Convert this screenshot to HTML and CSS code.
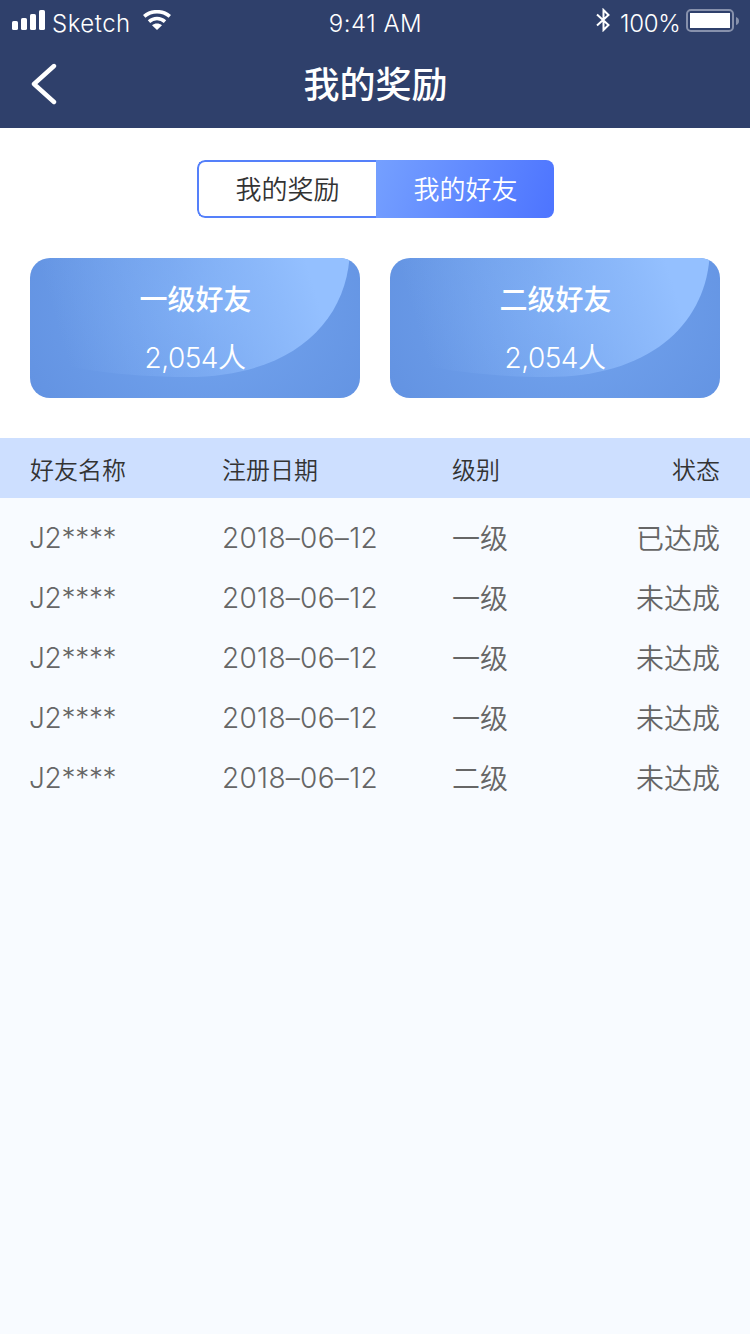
FILE: index.html
```html
<!DOCTYPE html>
<html lang="zh-CN">
<head>
<meta charset="UTF-8">
<meta name="viewport" content="width=750">
<title>我的奖励</title>
<link rel="stylesheet" href="styles.css">
</head>
<body>
<svg class="defs" width="0" height="0" aria-hidden="true">
  <defs>
    <linearGradient id="shine" gradientUnits="userSpaceOnUse" x1="40" y1="110" x2="286" y2="35">
      <stop offset="0" stop-color="#94c0ff" stop-opacity="0"/>
      <stop offset="0.5" stop-color="#94c0ff" stop-opacity="0.36"/>
      <stop offset="1" stop-color="#94c0ff"/>
    </linearGradient>
  </defs>
</svg>
<header class="header">
  <div class="status">
    <div class="status-left">
      <svg class="signal" width="33" height="20" viewBox="0 0 33 20" fill="#fff"><rect x="0" y="11" width="6" height="9" rx="1.6"/><rect x="9" y="8" width="6" height="12" rx="1.6"/><rect x="18" y="4" width="6" height="16" rx="1.6"/><rect x="27" y="0" width="6" height="20" rx="1.6"/></svg>
      <span class="carrier">Sketch</span>
      <svg class="wifi" width="28" height="20" viewBox="0 0 28 20" fill="none" stroke="#fff" stroke-width="3.6"><path d="M1.2 6.4C8.5 .1 19.5 .1 26.8 6.4"/><path d="M6 11.6C10.600 7.500 17.400 7.500 22 11.600"/><path d="M14 20L9 15.300C11.800 12.800 16.200 12.800 19 15.300Z" fill="#fff" stroke="none"/></svg>
    </div>
    <span class="time">9:41 AM</span>
    <div class="status-right">
      <svg class="bluetooth" width="14" height="24" viewBox="0 0 14 24" fill="none" stroke="#fff" stroke-width="2"><path d="M1 6.500L12.500 17L7.500 22V2L12.500 7L1 17.500"/></svg>
      <span class="percent">100%</span>
      <svg class="battery" width="53" height="24" viewBox="0 0 53 24"><rect x="1" y="1" width="46" height="21" rx="4" fill="none" stroke="#8791ac" stroke-width="2"/><rect x="4" y="4" width="40" height="15" fill="#fff"/><path d="M50 8Q53 9 53 12Q53 15 50 16Z" fill="#8791ac"/></svg>
    </div>
  </div>
  <nav class="navbar">
    <svg class="back" width="26" height="42" viewBox="0 0 26 42" fill="none" stroke="#fff" stroke-width="4.4" stroke-linecap="round" stroke-linejoin="round"><path d="M23 3L3 21L23 39"/></svg>
    <h1 class="title">我的奖励</h1>
  </nav>
</header>
<section class="summary">
  <div class="tabs">
    <div class="tab">我的奖励</div>
    <div class="tab tab-active">我的好友</div>
  </div>
  <div class="cards">
    <div class="card">
      <svg class="card-bg" viewBox="0 0 330 140"><path fill="url(#shine)" d="M0 0H319.500C314 68 258 119 157 119C90 119 40 110 0 100Z"/></svg>
      <div class="card-name">一级好友</div>
      <div class="card-count">2,054<span class="unit">人</span></div>
    </div>
    <div class="card">
      <svg class="card-bg" viewBox="0 0 330 140"><path fill="url(#shine)" d="M0 0H319.500C314 68 258 119 157 119C90 119 40 110 0 100Z"/></svg>
      <div class="card-name">二级好友</div>
      <div class="card-count">2,054<span class="unit">人</span></div>
    </div>
  </div>
</section>
<main class="table">
  <div class="row row-head"><span>好友名称</span><span>注册日期</span><span>级别</span><span>状态</span></div>
  <div class="rows">
    <div class="row"><span class="name">J2****</span><span class="date">2018–06–12</span><span>一级</span><span>已达成</span></div>
    <div class="row"><span class="name">J2****</span><span class="date">2018–06–12</span><span>一级</span><span>未达成</span></div>
    <div class="row"><span class="name">J2****</span><span class="date">2018–06–12</span><span>一级</span><span>未达成</span></div>
    <div class="row"><span class="name">J2****</span><span class="date">2018–06–12</span><span>一级</span><span>未达成</span></div>
    <div class="row"><span class="name">J2****</span><span class="date">2018–06–12</span><span>二级</span><span>未达成</span></div>
  </div>
</main>
</body>
</html>
```
FILE: styles.css
```css
* { box-sizing: border-box; }
body {
  margin: 0;
  width: 750px;
  min-height: 1334px;
  background: #f8fbff;
  font-family: Inter, "Noto Sans CJK SC", sans-serif;
  color: #333;
}
.defs { position: absolute; }
.header { height: 128px; background: #2f406b; color: #fff; }
.status {
  display: grid;
  grid-template-columns: 1fr auto 1fr;
  height: 40px;
  padding: 0 11px 0 12px;
  font-size: 24px;
  font-weight: 350;
  line-height: 46px;
}
.status-left, .status-right { display: flex; align-items: flex-start; }
.status-right { justify-content: flex-end; }
.signal { margin-top: 10px; }
.carrier { width: 79px; margin-left: 7px; letter-spacing: 0.5px; line-height: 47px; }
.wifi { margin: 10px 0 0 12px; }
.time { letter-spacing: 0.5px; line-height: 48px; }
.bluetooth { margin: 8px 10px 0 0; }
.percent { width: 61px; margin-right: 5px; letter-spacing: -0.3px; line-height: 47px; }
.battery { margin-top: 9px; }
.navbar {
  display: grid;
  grid-template-columns: 60px 1fr 60px;
  height: 88px;
  padding: 0 31px;
}
.back { margin-top: 23px; }
.title {
  margin: 0;
  padding-left: 1px;
  text-align: center;
  font-size: 36px;
  font-weight: 500;
  line-height: 91px;
}
.summary { height: 310px; padding: 32px 30px 0; background: #fff; }
.tabs {
  display: flex;
  width: 357px;
  height: 58px;
  margin: 0 auto 40px 167px;
  border-radius: 8px;
  overflow: hidden;
  font-size: 26px;
  font-weight: 350;
  line-height: 57px;
  text-align: center;
}
.tab {
  width: 179px;
  border: 2px solid #5580fa;
  border-right: 0;
  border-radius: 8px 0 0 8px;
  line-height: 56px;
}
.tab-active {
  width: 178px;
  padding: 2px 0 0 1px;
  border: 0;
  border-radius: 0;
  color: #fff;
  background: linear-gradient(108deg, #75a0ff 0%, #4d74ff 100%);
}
.cards { display: grid; grid-template-columns: 330px 330px; gap: 30px; }
.card {
  position: relative;
  height: 140px;
  padding-top: 22px;
  border-radius: 20px;
  overflow: hidden;
  color: #fff;
  text-align: center;
  font-size: 28px;
  line-height: 40px;
  background: radial-gradient(ellipse 230px 200px at 175px 50px, #74a5ef 0%, #6090e0 100%);
}
.card-bg { position: absolute; inset: 0; }
.card-name { position: relative; padding-left: 1px; font-weight: 500; }
.card-count { position: relative; margin-top: 18px; font-weight: 300; letter-spacing: -0.5px; }
.unit { font-weight: 350; }
.row {
  display: grid;
  grid-template-columns: 192px 230px 150px 1fr;
  height: 60px;
  padding: 0 30px;
  font-size: 28px;
  line-height: 62px;
  color: #666;
  font-weight: 350;
}
.row > :last-child { text-align: right; }
.row-head { background: #cddfff; color: #333; font-size: 24px; line-height: 66px; }
.name, .date { line-height: 61px; font-weight: 300; }
.name { margin-left: -1px; letter-spacing: -0.3px; }
.date { letter-spacing: 0.3px; }
.rows { padding-top: 10px; }
```
